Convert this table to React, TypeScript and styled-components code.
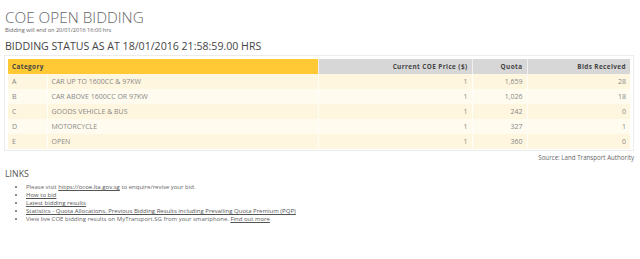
import React from 'react';
import styled, { createGlobalStyle } from 'styled-components';

const Global = createGlobalStyle`
  html, body {
    margin: 0;
    padding: 0;
    background: #fff;
  }
  body {
    font-family: 'Open Sans', 'Liberation Sans', sans-serif;
    color: #555;
  }
`;

const Page = styled.div`
  width: 640px;
  height: 259px;
  padding: 8px 6px 0 4px;
  box-sizing: border-box;
`;

const Title = styled.h1`
  margin: 0 0 0 1px;
  font-size: 15.3px;
  font-weight: 300;
  line-height: 18px;
  color: #666;
`;

const Subtitle = styled.div`
  margin: 0 0 0 1px;
  font-size: 5.6px;
  line-height: 8px;
  color: #666;
`;

const Status = styled.h2`
  margin: 7px 0 3px 1px;
  font-size: 10.6px;
  font-weight: 400;
  line-height: 11px;
  color: #444;
`;

const Box = styled.div`
  border: 1px solid #ececec;
  padding: 3px 3px 1px 3px;
`;

const Table = styled.table`
  width: 100%;
  border-collapse: collapse;
  font-size: 7px;
`;

const Th = styled.th<{ $yellow?: boolean }>`
  height: 15px;
  padding: 0 4px;
  box-sizing: border-box;
  background: ${(p) => (p.$yellow ? '#fec934' : '#d7d7d7')};
  text-align: ${(p) => (p.$yellow ? 'left' : 'right')};
  font-weight: 700;
  font-size: 6.4px;
  color: #444;
  letter-spacing: 0.4px;
  border-right: 1px solid #efefef;
  &:last-child {
    border-right: none;
  }
`;

const Tr = styled.tr<{ $odd: boolean }>`
  background: ${(p) => (p.$odd ? '#fff6df' : '#fffbee')};
`;

const Td = styled.td<{ $right?: boolean }>`
  height: 15px;
  padding: 0 4px;
  box-sizing: border-box;
  text-align: ${(p) => (p.$right ? 'right' : 'left')};
  color: #888;
  border-right: 1px solid #fffdf7;
  &:last-child {
    border-right: none;
  }
`;

const Source = styled.div`
  text-align: right;
  font-size: 6.2px;
  line-height: 9px;
  margin-top: 2px;
  color: #666;
`;

const LinksTitle = styled.h3`
  margin: 7px 0 3px 1px;
  font-size: 8.8px;
  font-weight: 400;
  line-height: 11px;
  color: #555;
`;

const List = styled.ul`
  margin: 0;
  padding-left: 22px;
  font-size: 6px;
  line-height: 8px;
  color: #666;
  list-style: disc;
`;

const Link = styled.a`
  color: #555;
  text-decoration: underline;
`;

const rows = [
  { c: 'A', name: 'CAR UP TO 1600CC & 97KW', price: '1', quota: '1,659', bids: '28' },
  { c: 'B', name: 'CAR ABOVE 1600CC OR 97KW', price: '1', quota: '1,026', bids: '18' },
  { c: 'C', name: 'GOODS VEHICLE & BUS', price: '1', quota: '242', bids: '0' },
  { c: 'D', name: 'MOTORCYCLE', price: '1', quota: '327', bids: '1' },
  { c: 'E', name: 'OPEN', price: '1', quota: '360', bids: '0' },
];

export default function App() {
  return (
    <Page>
      <Global />
      <Title>COE OPEN BIDDING</Title>
      <Subtitle>Bidding will end on 20/01/2016 16:00 hrs</Subtitle>
      <Status>BIDDING STATUS AS AT 18/01/2016 21:58:59.00 HRS</Status>
      <Box>
        <Table>
          <colgroup>
            <col style={{ width: 39 }} />
            <col style={{ width: 271 }} />
            <col style={{ width: 154 }} />
            <col style={{ width: 55 }} />
            <col />
          </colgroup>
          <thead>
            <tr>
              <Th $yellow colSpan={2}>Category</Th>
              <Th>Current COE Price ($)</Th>
              <Th>Quota</Th>
              <Th>Bids Received</Th>
            </tr>
          </thead>
          <tbody>
            {rows.map((r, i) => (
              <Tr key={r.c} $odd={i % 2 === 0}>
                <Td>{r.c}</Td>
                <Td>{r.name}</Td>
                <Td $right>{r.price}</Td>
                <Td $right>{r.quota}</Td>
                <Td $right>{r.bids}</Td>
              </Tr>
            ))}
          </tbody>
        </Table>
      </Box>
      <Source>Source: Land Transport Authority</Source>
      <LinksTitle>LINKS</LinksTitle>
      <List>
        <li>
          Please visit <Link href="#">https://ocoe.lta.gov.sg</Link> to enquire/revise your bid.
        </li>
        <li>
          <Link href="#">How to bid</Link>
        </li>
        <li>
          <Link href="#">Latest bidding results</Link>
        </li>
        <li>
          <Link href="#">
            Statistics - Quota Allocations, Previous Bidding Results including Prevailing Quota Premium (PQP)
          </Link>
        </li>
        <li>
          View live COE bidding results on MyTransport.SG from your smartphone. <Link href="#">Find out more</Link>
        </li>
      </List>
    </Page>
  );
}
